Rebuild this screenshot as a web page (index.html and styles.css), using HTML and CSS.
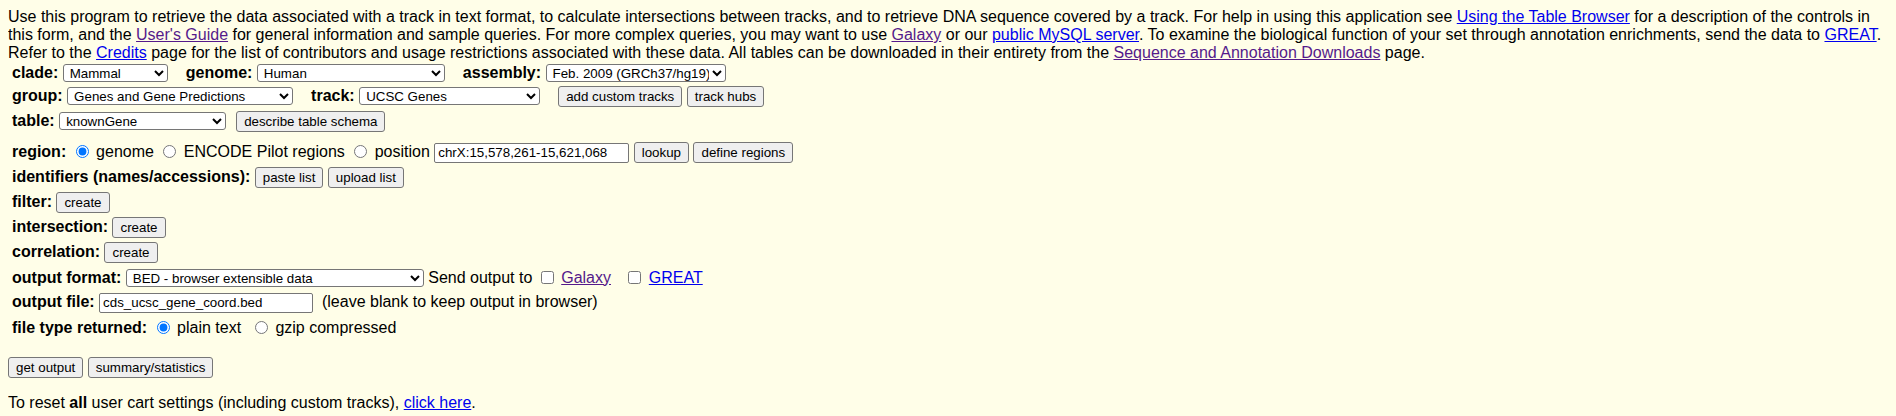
FILE: index.html
```html
<!DOCTYPE html>
<html>
<head>
<meta charset="utf-8">
<title>Table Browser</title>
<link rel="stylesheet" href="styles.css">
</head>
<body>
<p class="intro">Use this program to retrieve the data associated with a track in text format, to calculate intersections between tracks, and to retrieve DNA sequence covered by a track. For help in using this application see <a class="lnk" href="#">Using the Table Browser</a> for a description of the controls in<br>this form, and the <a class="lnk visited" href="#">User's Guide</a> for general information and sample queries. For more complex queries, you may want to use <a class="lnk visited" href="#">Galaxy</a> or our <a class="lnk" href="#">public MySQL server</a>. To examine the biological function of your set through annotation enrichments, send the data to <a class="lnk" href="#">GREAT</a>.<br>Refer to the <a class="lnk" href="#">Credits</a> page for the list of contributors and usage restrictions associated with these data. All tables can be downloaded in their entirety from the <a class="lnk visited" href="#">Sequence and Annotation Downloads</a> page.</p>

<form class="tb-form">
  <div class="top-rows">
    <div class="row row-clade">
      <span class="cell"><b>clade:</b> <select class="sel sel-clade"><option>Mammal</option></select></span>
      <span class="cell"><b>genome:</b> <select class="sel sel-genome"><option>Human</option></select></span>
      <span class="cell"><b>assembly:</b> <select class="sel sel-assembly"><option>Feb. 2009 (GRCh37/hg19)</option></select></span>
    </div>
    <div class="row row-group">
      <span class="cell"><b>group:</b> <select class="sel sel-group"><option>Genes and Gene Predictions</option></select></span>
      <span class="cell"><b>track:</b> <select class="sel sel-track"><option>UCSC Genes</option></select></span>
      <span class="cell"><button type="button" class="btn">add custom tracks</button> <button type="button" class="btn">track hubs</button></span>
    </div>
    <div class="row row-table">
      <span class="cell"><b>table:</b> <select class="sel sel-table"><option>knownGene</option></select></span>
      <span class="cell cell-tight"><button type="button" class="btn">describe table schema</button></span>
    </div>
  </div>

  <div class="opt-rows">
    <div class="row">
      <span class="cell"><b>region:</b> <input type="radio" name="region" checked> genome <input type="radio" name="region"> ENCODE Pilot regions <input type="radio" name="region"> position <input type="text" class="txt txt-pos" value="chrX:15,578,261-15,621,068"> <button type="button" class="btn">lookup</button> <button type="button" class="btn">define regions</button></span>
    </div>
    <div class="row">
      <span class="cell"><b>identifiers (names/accessions):</b> <button type="button" class="btn">paste list</button> <button type="button" class="btn">upload list</button></span>
    </div>
    <div class="row">
      <span class="cell"><b>filter:</b> <button type="button" class="btn">create</button></span>
    </div>
    <div class="row">
      <span class="cell"><b>intersection:</b> <button type="button" class="btn">create</button></span>
    </div>
    <div class="row">
      <span class="cell"><b>correlation:</b> <button type="button" class="btn">create</button></span>
    </div>
    <div class="row">
      <span class="cell"><b>output format:</b> <select class="sel sel-format"><option>BED - browser extensible data</option></select> Send output to <input type="checkbox"> <a class="lnk visited" href="#">Galaxy</a>&nbsp;&nbsp;&nbsp;<input type="checkbox"> <a class="lnk" href="#">GREAT</a></span>
    </div>
    <div class="row">
      <span class="cell"><b>output file:</b> <input type="text" class="txt txt-file" value="cds_ucsc_gene_coord.bed">&nbsp; (leave blank to keep output in browser)</span>
    </div>
    <div class="row">
      <span class="cell"><b>file type returned:</b> <input type="radio" name="ftype" checked> plain text&nbsp; <input type="radio" name="ftype"> gzip compressed</span>
    </div>
  </div>

  <div class="actions">
    <span class="cell"><button type="button" class="btn">get output</button> <button type="button" class="btn">summary/statistics</button></span>
  </div>
</form>

<p class="reset">To reset <b>all</b> user cart settings (including custom tracks), <a class="lnk" href="#">click here</a>.</p>
</body>
</html>
```

FILE: styles.css
```css
html, body {
  background: #fffee8;
}
body {
  margin: 8px;
  color: #000;
  font-family: "Liberation Sans", Arial, Helvetica, sans-serif;
  font-size: 16px;
}
.intro {
  margin: 0;
  line-height: 18px;
  white-space: nowrap;
}
.lnk {
  color: #0000ee;
  text-decoration: underline;
}
.lnk.visited {
  color: #551a8b;
}
.tb-form {
  margin: 0;
}
.top-rows,
.opt-rows {
  padding-left: 4px;
}
.opt-rows {
  margin-top: 6px;
}
.row {
  display: flex;
  align-items: center;
  height: 25px;
  white-space: nowrap;
}
.row-clade { height: 22px; }
.row-group { height: 24px; }
.row-table { height: 26px; }
.cell + .cell {
  margin-left: 18px;
}
.cell + .cell-tight {
  margin-left: 10px;
}
.sel,
.btn,
.txt {
  font-family: "Liberation Sans", Arial, Helvetica, sans-serif;
  font-size: 13.333px;
  color: #000;
  vertical-align: middle;
  box-sizing: border-box;
}
.sel {
  height: 18px;
  border: 1px solid #767676;
  border-radius: 3px;
  background-color: #fff;
  padding: 0 0 0 2px;
  margin: 0;
}
.sel-clade { width: 105px; }
.sel-genome { width: 188px; }
.sel-assembly { width: 180px; }
.sel-group { width: 226px; }
.sel-track { width: 181px; }
.sel-table { width: 167px; }
.sel-format { width: 298px; }
.btn {
  height: 21px;
  padding: 1px 7px;
  border: 1px solid #767676;
  border-radius: 3px;
  background: #efefef;
  margin: 0;
}
.txt {
  height: 20px;
  padding: 1px 3px;
  border: 1px solid #767676;
  border-radius: 2px;
  background: #fff;
  margin: 0;
}
.txt-pos { width: 195px; }
.txt-file { width: 214px; }
input[type="radio"],
input[type="checkbox"] {
  vertical-align: -1px;
}
.actions {
  margin-top: 15px;
  height: 25px;
  display: flex;
  align-items: center;
  white-space: nowrap;
}
.reset {
  margin: 14px 0 0;
  line-height: 18px;
}
```
